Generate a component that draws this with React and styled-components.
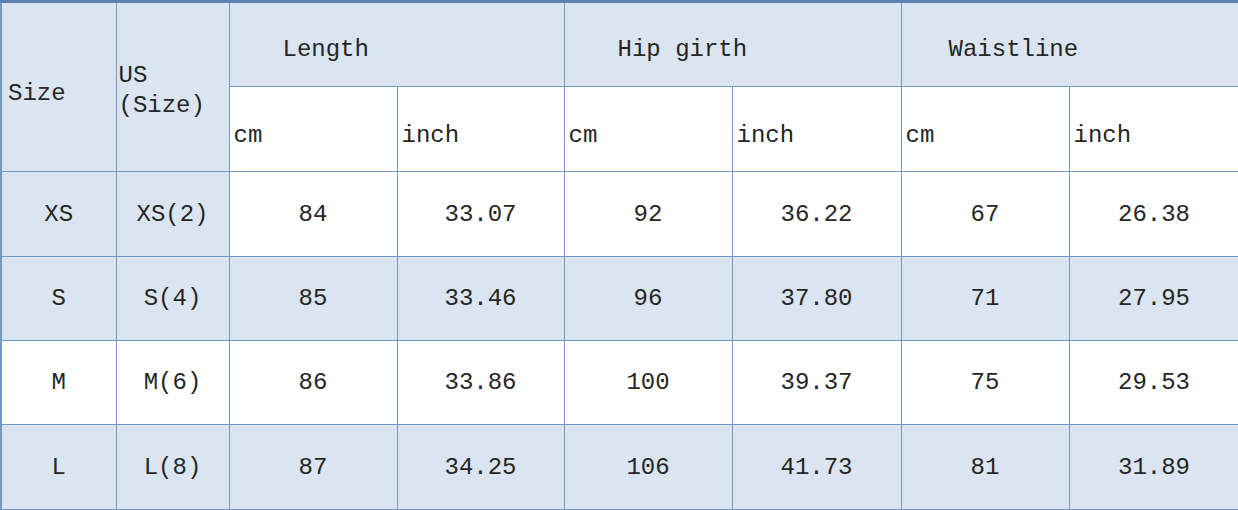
import React from "react";
import styled, { createGlobalStyle } from "styled-components";

const GlobalStyle = createGlobalStyle`
  html, body {
    margin: 0;
    padding: 0;
    background: #ffffff;
  }
`;

const BLUE = "#dbe5f1";
const LINE = "#7398c2";

const Table = styled.table`
  width: 1238px;
  height: 510px;
  table-layout: fixed;
  border-collapse: collapse;
  border-top: 3px solid #5a82b4;
  border-left: 2px solid ${LINE};
  font-family: "Liberation Mono", "DejaVu Sans Mono", monospace;
  font-size: 24px;
  color: #262626;
`;

const Row = styled.tr`
  height: ${props => props.h}px;
`;

const Cell = styled.td`
  border: 1px solid ${LINE};
  padding: 0;
  background: ${props => (props.blue ? BLUE : "#ffffff")};
  text-align: center;
  vertical-align: middle;
  white-space: nowrap;
`;

const SizeHead = styled(Cell)`
  text-align: left;
  padding: 12px 0 0 6px;
`;

const UsHead = styled(Cell)`
  text-align: left;
  padding: 8px 0 0 2px;
  line-height: 30px;
`;

const GroupHead = styled(Cell)`
  text-align: left;
  padding: 9px 0 0 ${props => props.indent}px;
`;

const UnitHead = styled(Cell)`
  text-align: left;
  padding: 12px 0 0 4px;
`;

const widths = [115, 113, 168, 167, 168, 169, 168, 170];

const groups = [
  { name: "Length", indent: 53 },
  { name: "Hip girth", indent: 53 },
  { name: "Waistline", indent: 47 },
];

const rows = [
  { size: "XS", us: "XS(2)", values: ["84", "33.07", "92", "36.22", "67", "26.38"], side: true, body: false, h: 85 },
  { size: "S", us: "S(4)", values: ["85", "33.46", "96", "37.80", "71", "27.95"], side: true, body: true, h: 84 },
  { size: "M", us: "M(6)", values: ["86", "33.86", "100", "39.37", "75", "29.53"], side: false, body: false, h: 84 },
  { size: "L", us: "L(8)", values: ["87", "34.25", "106", "41.73", "81", "31.89"], side: true, body: true, h: 85 },
];

export default function App() {
  return (
    <>
      <GlobalStyle />
      <Table>
        <colgroup>
          {widths.map((w, i) => (
            <col key={i} style={{ width: w }} />
          ))}
        </colgroup>
        <tbody>
          <Row h={85}>
            <SizeHead blue rowSpan={2}>Size</SizeHead>
            <UsHead blue rowSpan={2}>
              US
              <br />
              (Size)
            </UsHead>
            {groups.map(g => (
              <GroupHead blue colSpan={2} indent={g.indent} key={g.name}>
                {g.name}
              </GroupHead>
            ))}
          </Row>
          <Row h={85}>
            {groups.map(g => (
              <React.Fragment key={g.name}>
                <UnitHead>cm</UnitHead>
                <UnitHead>inch</UnitHead>
              </React.Fragment>
            ))}
          </Row>
          {rows.map(r => (
            <Row h={r.h} key={r.size}>
              <Cell blue={r.side}>{r.size}</Cell>
              <Cell blue={r.side}>{r.us}</Cell>
              {r.values.map((v, i) => (
                <Cell blue={r.body} key={i}>{v}</Cell>
              ))}
            </Row>
          ))}
        </tbody>
      </Table>
    </>
  );
}
